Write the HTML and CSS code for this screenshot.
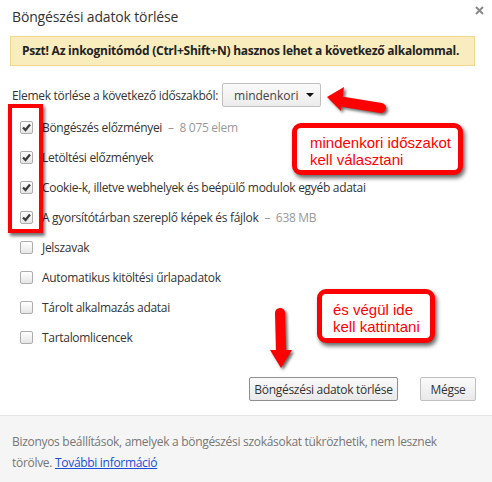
FILE: index.html
```html
<!DOCTYPE html>
<html lang="hu">
<head>
<meta charset="utf-8">
<title>Böngészési adatok törlése</title>
<link rel="stylesheet" href="styles.css">
</head>
<body>
<div class="dialog">
  <div class="head">
    <h1 class="title">Böngészési adatok törlése</h1>
    <svg class="close" width="9" height="9" viewBox="0 0 9 9"><path d="M1 1 L8 8 M8 1 L1 8" stroke="#8a8a8a" stroke-width="2"/></svg>
  </div>
  <div class="banner">Pszt! Az inkognitómód (Ctrl+Shift+N) hasznos lehet a következő alkalommal.</div>
  <div class="range">
    <span class="range-label">Elemek törlése a következő időszakból:</span>
    <div class="select"><span>mindenkori</span><span class="caret"></span></div>
  </div>
  <ul class="opts">
    <li class="opt"><span class="cb on"><svg width="13" height="13" viewBox="0 0 13 13"><path d="M3 6.5 L5.5 9 L10 3.5" fill="none" stroke="#3c3c3c" stroke-width="2.3"/></svg></span><span>Böngészés előzményei</span><span class="meta">–&nbsp; 8 075 elem</span></li>
    <li class="opt"><span class="cb on"><svg width="13" height="13" viewBox="0 0 13 13"><path d="M3 6.5 L5.5 9 L10 3.5" fill="none" stroke="#3c3c3c" stroke-width="2.3"/></svg></span><span>Letöltési előzmények</span></li>
    <li class="opt"><span class="cb on"><svg width="13" height="13" viewBox="0 0 13 13"><path d="M3 6.5 L5.5 9 L10 3.5" fill="none" stroke="#3c3c3c" stroke-width="2.3"/></svg></span><span>Cookie-k, illetve webhelyek és beépülő modulok egyéb adatai</span></li>
    <li class="opt"><span class="cb on"><svg width="13" height="13" viewBox="0 0 13 13"><path d="M3 6.5 L5.5 9 L10 3.5" fill="none" stroke="#3c3c3c" stroke-width="2.3"/></svg></span><span>A gyorsítótárban szereplő képek és fájlok</span><span class="meta">–&nbsp; 638 MB</span></li>
    <li class="opt"><span class="cb"></span><span>Jelszavak</span></li>
    <li class="opt"><span class="cb"></span><span>Automatikus kitöltési űrlapadatok</span></li>
    <li class="opt"><span class="cb"></span><span>Tárolt alkalmazás adatai</span></li>
    <li class="opt"><span class="cb"></span><span>Tartalomlicencek</span></li>
  </ul>
  <div class="actions">
    <button class="btn primary">Böngészési adatok törlése</button>
    <button class="btn">Mégse</button>
  </div>
  <div class="foot">Bizonyos beállítások, amelyek a böngészési szokásokat tükrözhetik, nem lesznek<br>törölve. <a class="link" href="#">További információ</a></div>

  <div class="mark-box"></div>
  <div class="note note-range">mindenkori időszakot<br>kell választani</div>
  <div class="note note-click">és végül ide<br>kell kattintani</div>
  <svg class="arrow arrow-left" width="70" height="34" viewBox="322 82 70 34">
    <line x1="344" y1="102" x2="381" y2="108" stroke="#ff0000" stroke-width="10" stroke-linecap="round"/>
    <polygon points="327,97 344,87 341,111" fill="#ff0000"/>
  </svg>
  <svg class="arrow arrow-down" width="30" height="66" viewBox="266 304 30 66">
    <line x1="280" y1="313" x2="281" y2="352" stroke="#ff0000" stroke-width="10" stroke-linecap="round"/>
    <polygon points="270,350 292,350 281,368" fill="#ff0000"/>
  </svg>
</div>
</body>
</html>
```

FILE: styles.css
```css
* { box-sizing: border-box; }
html, body { margin: 0; padding: 0; background: #fff; }
body {
  font-family: "Open Sans", "Noto Sans", sans-serif;
  font-size: 12px;
  color: #333;
}
.dialog {
  position: relative;
  width: 492px;
  height: 482px;
  display: flex;
  flex-direction: column;
  overflow: hidden;
}
.head {
  height: 36px;
  display: flex;
  align-items: flex-start;
  justify-content: space-between;
  padding: 7px 8px 0 12px;
}
.title {
  margin: 0;
  font-size: 14px;
  font-weight: normal;
  line-height: 20px;
  color: #333;
  letter-spacing: -0.15px;
}
.close { margin-top: -1px; }
.banner {
  margin: 0 17px 0 10px;
  height: 30px;
  line-height: 28px;
  padding-left: 11px;
  background: #f9edbe;
  border: 1px solid #f0d98b;
  font-weight: bold;
  font-size: 12px;
  color: #222;
  letter-spacing: -0.25px;
}
.range {
  margin-top: 17px;
  padding-left: 12px;
  display: flex;
  align-items: center;
  gap: 4px;
  height: 24px;
}
.range-label { letter-spacing: -0.3px; }
.select {
  width: 99px;
  height: 24px;
  border: 1px solid #c0c0c0;
  border-radius: 2px;
  background: linear-gradient(#fafafa, #ececec);
  display: flex;
  align-items: center;
  justify-content: space-between;
  padding: 0 6px 0 11px;
  color: #444;
}
.caret {
  width: 0; height: 0;
  border-left: 4px solid transparent;
  border-right: 4px solid transparent;
  border-top: 4px solid #111;
}
.opts {
  list-style: none;
  margin: 5px 0 0;
  padding: 0 0 0 20px;
}
.opt {
  height: 30px;
  display: flex;
  align-items: center;
  letter-spacing: -0.3px;
}
.cb {
  width: 13px;
  height: 13px;
  border: 1px solid #adadad;
  border-radius: 2px;
  background: linear-gradient(#ffffff, #e6e6e6);
  margin-right: 9px;
  flex: none;
  display: flex;
  align-items: center;
  justify-content: center;
}
.cb svg { display: block; margin: -1px; }
.meta { color: #999; margin-left: 6px; }
.actions {
  margin-top: 25px;
  padding-right: 16px;
  display: flex;
  justify-content: flex-end;
  gap: 22px;
}
.btn {
  font: inherit;
  letter-spacing: -0.3px;
  color: #333;
  height: 24px;
  padding: 0;
  white-space: nowrap;
  border: 1px solid #c0c0c0;
  border-radius: 2px;
  background: linear-gradient(#fafafa, #e9e9e9);
}
.btn.primary { width: 149px; border-color: #8f8f8f; }
.btn:not(.primary) { width: 56px; }
.foot {
  margin-top: 14px;
  flex: 1;
  background: #f5f5f5;
  border-top: 1px solid #e5e5e5;
  padding: 15px 12px 0;
  line-height: 21px;
  color: #777;
  letter-spacing: -0.3px;
}
.link { color: #1a4ed8; text-decoration: underline; }

.mark-box {
  position: absolute;
  left: 8px;
  top: 104px;
  width: 35px;
  height: 129px;
  border: 4px solid #ff0000;
  box-shadow: 2px 3px 3px rgba(0,0,0,0.55);
}
.note {
  position: absolute;
  border: 5px solid #ff0000;
  border-radius: 9px;
  background: #fff;
  color: #ff0000;
  font-family: "Liberation Sans", Arial, sans-serif;
  font-size: 15px;
  line-height: 17px;
  box-shadow: 2px 3px 4px rgba(0,0,0,0.6);
}
.note-range {
  left: 292px;
  top: 123px;
  width: 171px;
  height: 52px;
  padding: 6px 0 0 13px;
}
.note-click {
  left: 317px;
  top: 289px;
  width: 118px;
  height: 54px;
  padding: 7px 0 0 11px;
}
.arrow {
  position: absolute;
  filter: drop-shadow(2px 2px 1.5px rgba(0,0,0,0.6));
  overflow: visible;
}
.arrow-left { left: 322px; top: 82px; }
.arrow-down { left: 266px; top: 304px; }
```
